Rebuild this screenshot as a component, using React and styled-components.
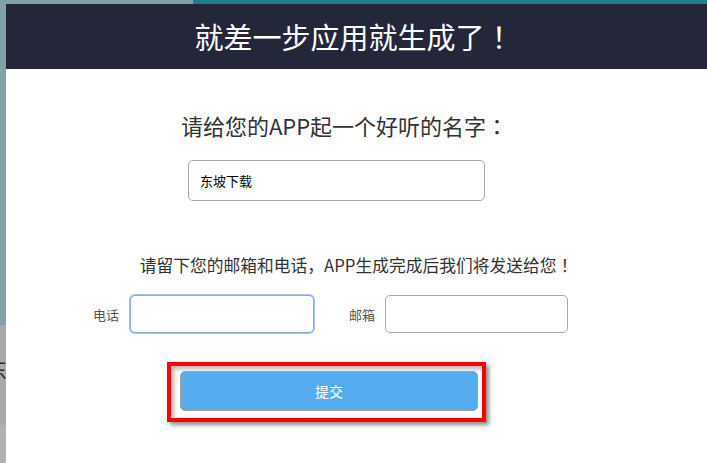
import React from 'react';
import styled, { createGlobalStyle } from 'styled-components';

const GlobalStyle = createGlobalStyle`
  html, body {
    margin: 0;
    padding: 0;
    overflow: hidden;
    background: #ffffff;
  }
  * {
    box-sizing: border-box;
  }
`;

const FONT = `"Noto Sans CJK SC", "Noto Sans", sans-serif`;

const Page = styled.div`
  display: grid;
  grid-template-columns: 6px 1fr;
  grid-template-rows: 4px 1fr;
  width: 707px;
  height: 463px;
  overflow: hidden;
  font-family: ${FONT};
`;

const TopStrip = styled.div`
  grid-column: 1 / 3;
  display: flex;
`;

const LeftStrip = styled.div`
  display: flex;
  flex-direction: column;
  overflow: hidden;
`;

const Seg = styled.div`
  background: ${({ color }) => color};
  flex: ${({ size }) => (size ? `0 0 ${size}px` : '1 1 auto')};
  overflow: hidden;
  display: flex;
  align-items: center;
`;

const BackGlyph = styled.span`
  font-size: 22px;
  line-height: 1;
  color: #2a2a2a;
  margin-left: -15px;
  margin-top: -14px;
`;

const Modal = styled.div`
  width: 701px;
  background: #ffffff;
  display: flex;
  flex-direction: column;
`;

const Header = styled.div`
  height: 65px;
  background: #24263a;
  display: flex;
  align-items: center;
  justify-content: center;
  padding-right: 5px;
`;

const Title = styled.h1`
  margin: 0;
  font-size: 29px;
  font-weight: 400;
  color: #ffffff;
  line-height: 1;
`;

// centred full-width marks, as in the reference
const Punct = styled.span`
  font-family: "Noto Sans CJK JP", "Noto Sans CJK SC", sans-serif;
`;

const Prompt = styled.p`
  margin: ${({ mt }) => mt}px 0 0;
  padding: ${({ shift }) => (shift < 0 ? `0 ${-shift * 2}px 0 0` : `0 0 0 ${shift * 2}px`)};
  text-align: center;
  font-size: ${({ size }) => size}px;
  line-height: ${({ lh }) => lh}px;
  color: #333333;
`;

const NameInput = styled.input`
  display: block;
  margin: 20px 0 0 182px;
  width: 297px;
  height: 41px;
  border: 1px solid #a9a9a9;
  border-radius: 5px;
  padding: 0 11px;
  font-family: ${FONT};
  font-size: 13px;
  color: #000000;
  outline: none;
`;

const ContactRow = styled.div`
  display: flex;
  align-items: center;
  margin: 18px 0 0 87px;
  height: 38px;
`;

const Field = styled.label`
  display: flex;
  align-items: center;
  gap: ${({ gap }) => gap}px;
  margin-right: 35px;
  font-size: 13px;
  color: #555555;
`;

const ContactInput = styled.input`
  width: ${({ w }) => w}px;
  height: 38px;
  border-radius: 5px;
  border: 1px solid ${({ focused }) => (focused ? '#86abec' : '#a9a9a9')};
  box-shadow: ${({ focused }) => (focused ? '0 0 0 1px #a8c3f2' : 'none')};
  outline: none;
  font-family: ${FONT};
`;

const Highlight = styled.div`
  margin: 29px 0 0 161px;
  width: 319px;
  height: 60px;
  border: 4px solid #ff0000;
  padding: 5px 4px 7px 9px;
  box-shadow: 3px 3px 4px rgba(0, 0, 0, 0.45), inset 3px 3px 4px rgba(0, 0, 0, 0.3);
`;

const SubmitButton = styled.button`
  width: 100%;
  height: 40px;
  background: #55acee;
  border: 1px solid #a3a3a3;
  border-radius: 5px;
  color: #ffffff;
  font-family: ${FONT};
  font-size: 14px;
  cursor: pointer;
`;

export default function App() {
  return (
    <>
      <GlobalStyle />
      <Page>
        <TopStrip>
          <Seg color="#80a3a8" size={193} />
          <Seg color="#1f7e8c" />
        </TopStrip>
        <LeftStrip>
          <Seg color="#80a3a8" size={321} />
          <Seg color="#a9a9a9" size={100}>
            <BackGlyph>东</BackGlyph>
          </Seg>
          <Seg color="#b2b2b2" />
        </LeftStrip>
        <Modal>
          <Header>
            <Title>
              就差一步应用就生成了<Punct>！</Punct>
            </Title>
          </Header>
          <Prompt mt={41} size={22} lh={30} shift={-12}>
            请给您的APP起一个好听的名字<Punct>：</Punct>
          </Prompt>
          <NameInput defaultValue="东坡下载" />
          <Prompt mt={52} size={16.75} lh={24} shift={0}>
            请留下您的邮箱和电话<Punct>，</Punct>APP生成完成后我们将发送给您<Punct>！</Punct>
          </Prompt>
          <ContactRow>
            <Field gap={11}>
              电话
              <ContactInput w={184} focused />
            </Field>
            <Field gap={10}>
              邮箱
              <ContactInput w={183} />
            </Field>
          </ContactRow>
          <Highlight>
            <SubmitButton>提交</SubmitButton>
          </Highlight>
        </Modal>
      </Page>
    </>
  );
}
